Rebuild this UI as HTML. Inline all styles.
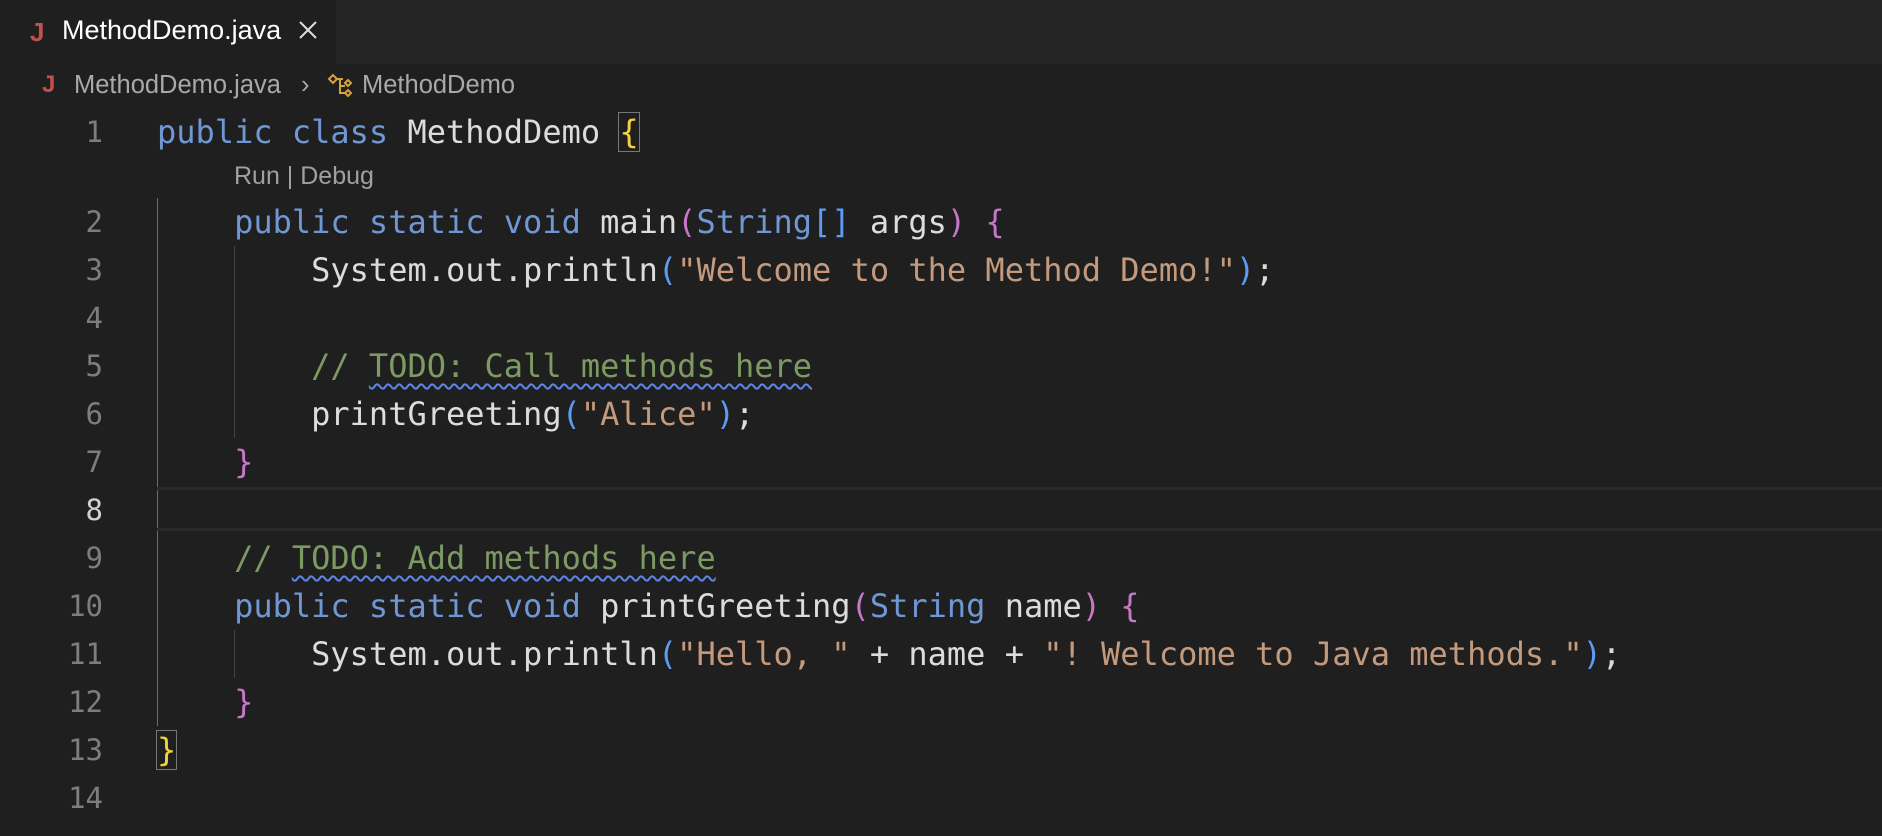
<!DOCTYPE html>
<html><head><meta charset="utf-8"><style>
*{margin:0;padding:0;box-sizing:border-box}
body{width:1882px;height:836px;background:#1f1f1f;overflow:hidden;position:relative;font-family:"DejaVu Sans Mono",monospace}
.tabbar{position:absolute;left:0;top:0;width:1882px;height:64px;background:#242424}
.tab{position:absolute;left:0;top:0;width:336px;height:64px;background:#1f1f1f;font-family:"Liberation Sans",sans-serif;font-size:27px;color:#fff}
.J{color:#c5504a;font-weight:bold;font-family:"Liberation Sans",sans-serif}
.crumb{position:absolute;top:71px;font-family:"Liberation Sans",sans-serif;font-size:25.5px;color:#a9a9a9;white-space:nowrap}
.ln{position:absolute;width:103px;text-align:right;font-size:29px;color:#7d7d7d;line-height:48px}
.code{position:absolute;left:157px;font-size:32px;line-height:48px;white-space:pre;color:#dcdcdc}
.k{color:#6e97d4}.s{color:#c49a7d}.c{color:#7c9a61}.p{color:#c678c6}.b{color:#5c9cf5}.y{color:#f2d33a}
.sq{text-decoration:underline wavy #5b87e8;text-decoration-thickness:1.5px;text-underline-offset:6px}
.guide{position:absolute;width:1px;background:#444}
</style></head><body>
<div class="tabbar"><div class="tab">
<span class="J" style="position:absolute;left:30px;top:17px;font-size:26px">J</span>
<span style="position:absolute;left:62px;top:15px">MethodDemo.java</span>
<svg style="position:absolute;left:298px;top:20px" width="20" height="20" viewBox="0 0 20 20"><path d="M2 2L18 18M18 2L2 18" stroke="#ddd" stroke-width="2"/></svg>
</div></div>
<span class="crumb J" style="left:42px;font-size:24px;color:#c5504a">J</span>
<span class="crumb" style="left:74px">MethodDemo.java</span>
<span class="crumb" style="left:301px;color:#aaa">›</span>
<svg style="position:absolute;left:327px;top:73px" width="28" height="26" viewBox="0 0 28 26" fill="none" stroke="#d9a23a" stroke-width="2"><path d="M2 6L6 2L10 6L6 10Z"/><path d="M10 6H16"/><path d="M13 6V20H18"/><path d="M13 13H18"/><path d="M18 10L21 7L24 10L21 13Z"/><path d="M18 20L21 17L24 20L21 23Z"/></svg>
<span class="crumb" style="left:362px">MethodDemo</span>

<div class="guide" style="left:157px;top:198px;height:528px;background:#6a6a6a"></div>
<div class="guide" style="left:234px;top:246px;height:192px"></div>
<div class="guide" style="left:234px;top:630px;height:48px"></div>
<div style="position:absolute;left:157px;top:487px;width:1725px;height:44px;border-top:3px solid #2a2a2a;border-bottom:3px solid #2a2a2a"></div>

<div class="ln" style="top:108px">1</div>
<div class="code" style="top:108px"><span class="k">public</span> <span class="k">class</span> MethodDemo <span class="y" style="outline:1px solid #777">{</span></div>
<div style="position:absolute;left:234px;top:162px;font-family:'Liberation Sans',sans-serif;font-size:25px;color:#a0a0a0">Run | Debug</div>
<div class="ln" style="top:198px">2</div>
<div class="code" style="top:198px">    <span class="k">public</span> <span class="k">static</span> <span class="k">void</span> main<span class="p">(</span><span class="k">String</span><span class="b">[]</span> args<span class="p">)</span> <span class="p">{</span></div>
<div class="ln" style="top:246px">3</div>
<div class="code" style="top:246px">        System.out.println<span class="b">(</span><span class="s">"Welcome to the Method Demo!"</span><span class="b">)</span>;</div>
<div class="ln" style="top:294px">4</div>
<div class="ln" style="top:342px">5</div>
<div class="code" style="top:342px">        <span class="c">// <span class="sq">TODO: Call methods here</span></span></div>
<div class="ln" style="top:390px">6</div>
<div class="code" style="top:390px">        printGreeting<span class="b">(</span><span class="s">"Alice"</span><span class="b">)</span>;</div>
<div class="ln" style="top:438px">7</div>
<div class="code" style="top:438px">    <span class="p">}</span></div>
<div class="ln" style="top:486px;color:#d0d0d0">8</div>
<div class="ln" style="top:534px">9</div>
<div class="code" style="top:534px">    <span class="c">// <span class="sq">TODO: Add methods here</span></span></div>
<div class="ln" style="top:582px">10</div>
<div class="code" style="top:582px">    <span class="k">public</span> <span class="k">static</span> <span class="k">void</span> printGreeting<span class="p">(</span><span class="k">String</span> name<span class="p">)</span> <span class="p">{</span></div>
<div class="ln" style="top:630px">11</div>
<div class="code" style="top:630px">        System.out.println<span class="b">(</span><span class="s">"Hello, "</span> + name + <span class="s">"! Welcome to Java methods."</span><span class="b">)</span>;</div>
<div class="ln" style="top:678px">12</div>
<div class="code" style="top:678px">    <span class="p">}</span></div>
<div class="ln" style="top:726px">13</div>
<div class="code" style="top:726px"><span class="y" style="outline:1px solid #777">}</span></div>
<div class="ln" style="top:774px">14</div>
</body></html>
